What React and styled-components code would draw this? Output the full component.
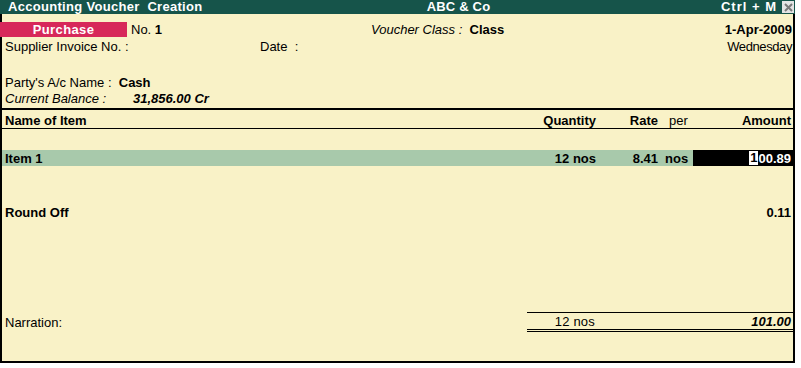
import styled, { createGlobalStyle } from "styled-components"

const GlobalStyle = createGlobalStyle`
  body {
    margin: 0;
    background: #ffffff;
    font-family: "Liberation Sans", Arial, sans-serif;
    font-size: 13px;
    color: #000;
  }
`

const Window = styled.div`
  width: 795px;
  height: 363px;
  display: flex;
  flex-direction: column;
`
const TitleBar = styled.div`
  height: 14px;
  background: #16544a;
  color: #fff;
  display: grid;
  grid-template-columns: 1fr auto 1fr;
  align-items: center;
  font-weight: bold;
  font-size: 13px;
  letter-spacing: 0.3px;
  line-height: 14px;
`
const TitleLeft = styled.span`
  padding-left: 8px;
  white-space: pre;
`
const TitleCenter = styled.span`
  padding-left: 122px;
  letter-spacing: 0.2px;
`
const TitleRight = styled.div`
  display: flex;
  justify-content: flex-end;
  align-items: center;
  gap: 5px;
  letter-spacing: 1px;
`
const CloseBox = styled.span`
  width: 12px;
  height: 12px;
  background: #e4e4e4;
  margin-right: 1px;
  display: flex;
  align-items: center;
  justify-content: center;
`
const Panel = styled.div`
  flex: 1;
  background: #f9f2c7;
  border: 2px solid #000;
  border-top: none;
  display: flex;
  flex-direction: column;
`
const Header = styled.div`
  padding-top: 8px;
  height: 86px;
`
const Row = styled.div`
  display: flex;
  align-items: center;
  height: ${(p) => p.$h || 16}px;
  margin-top: ${(p) => p.$mt || 0}px;
`
const Badge = styled.span`
  width: 127px;
  height: 15px;
  margin-left: -2px;
  background: #d7285a;
  color: #fff;
  font-weight: bold;
  letter-spacing: 0.4px;
  display: flex;
  align-items: center;
  justify-content: center;
`
const Field = styled.span`
  width: ${(p) => (p.$w ? `${p.$w}px` : "auto")};
  padding-left: ${(p) => p.$pl || 0}px;
  white-space: pre;
`
const Label = styled.span`
  font-style: ${(p) => (p.$italic ? "italic" : "normal")};
  white-space: pre;
`
const Value = styled.span`
  font-weight: bold;
  font-style: ${(p) => (p.$italic ? "italic" : "normal")};
  white-space: pre;
`
const RightText = styled.span`
  margin-left: auto;
  padding-right: 1px;
  font-weight: ${(p) => (p.$bold ? "bold" : "normal")};
  letter-spacing: ${(p) => (p.$bold ? 0 : -0.4)}px;
`
const Divider = styled.div`
  border-top: ${(p) => (p.$thick ? 2 : 1)}px solid #000;
`
const TableRow = styled.div`
  display: grid;
  grid-template-columns: 1fr 62px 62px 33px 100px;
  align-items: center;
  box-sizing: border-box;
  height: ${(p) => p.$h || 16}px;
  padding-top: ${(p) => p.$pt || 0}px;
  margin-top: ${(p) => p.$mt || 0}px;
  background: ${(p) => (p.$active ? "#a8c9ab" : "transparent")};
  font-weight: bold;
`
const Cell = styled.span`
  text-align: ${(p) => p.$align || "right"};
  padding: 0 ${(p) => (p.$align === "left" ? 0 : 2)}px 0
    ${(p) => (p.$align === "left" ? p.$pl || 3 : 0)}px;
  font-weight: ${(p) => (p.$light ? "normal" : "bold")};
  white-space: pre;
`
const AmountCell = styled.span`
  background: #000;
  color: #fff;
  height: 100%;
  display: flex;
  align-items: center;
  justify-content: flex-end;
  padding-right: 2px;
`
const Cursor = styled.span`
  background: #fff;
  color: #000;
  padding: 0 1px;
  line-height: 14px;
`
const Spacer = styled.div`
  flex: 1;
`
const Footer = styled.div`
  display: flex;
  align-items: center;
  padding-bottom: 29px;
`
const Narration = styled.span`
  flex: 1;
  padding-left: 3px;
  padding-top: 1px;
`
const Totals = styled.div`
  width: 266px;
  border-top: 1px solid #000;
  border-bottom: 3px double #000;
  display: grid;
  grid-template-columns: 1fr 100px;
  height: 16px;
  align-items: center;
`
const TotalQty = styled.span`
  text-align: right;
  padding-right: 98px;
  letter-spacing: 0.2px;
`
const TotalAmount = styled.span`
  text-align: right;
  padding-right: 2px;
  font-weight: bold;
  font-style: italic;
`

export default function App() {
  return (
    <>
      <GlobalStyle />
      <Window>
        <TitleBar>
          <TitleLeft>Accounting Voucher  Creation</TitleLeft>
          <TitleCenter>ABC &amp; Co</TitleCenter>
          <TitleRight>
            <span>Ctrl + M</span>
            <CloseBox>
              <svg width="9" height="9" viewBox="0 0 9 9">
                <path d="M1 1L8 8M8 1L1 8" stroke="#7a7a7a" strokeWidth="2" />
              </svg>
            </CloseBox>
          </TitleRight>
        </TitleBar>
        <Panel>
          <Header>
            <Row $h={15}>
              <Badge>Purchase</Badge>
              <Field $w={240} $pl={4}>
                <Label>No. </Label>
                <Value>1</Value>
              </Field>
              <Field>
                <Label $italic>Voucher Class :  </Label>
                <Value>Class</Value>
              </Field>
              <RightText $bold>1-Apr-2009</RightText>
            </Row>
            <Row $mt={1}>
              <Field $w={255} $pl={3}>
                <Label>Supplier Invoice No. :</Label>
              </Field>
              <Label>Date  :</Label>
              <RightText>Wednesday</RightText>
            </Row>
            <Row $mt={20}>
              <Field $pl={3}>
                <Label>Party's A/c Name :  </Label>
                <Value>Cash</Value>
              </Field>
            </Row>
            <Row>
              <Field $w={128} $pl={3}>
                <Label $italic>Current Balance :</Label>
              </Field>
              <Value $italic>31,856.00 Cr</Value>
            </Row>
          </Header>
          <Divider $thick />
          <TableRow $h={18} $pt={3}>
            <Cell $align="left">Name of Item</Cell>
            <Cell>Quantity</Cell>
            <Cell>Rate</Cell>
            <Cell $align="left" $pl={9} $light>per</Cell>
            <Cell>Amount</Cell>
          </TableRow>
          <Divider />
          <TableRow $mt={21} $active>
            <Cell $align="left">Item 1</Cell>
            <Cell>12 nos</Cell>
            <Cell>8.41</Cell>
            <Cell $align="left" $pl={5}>nos</Cell>
            <AmountCell>
              <Cursor>1</Cursor>00.89
            </AmountCell>
          </TableRow>
          <TableRow $mt={38}>
            <Cell $align="left">Round Off</Cell>
            <Cell />
            <Cell />
            <Cell />
            <Cell>0.11</Cell>
          </TableRow>
          <Spacer />
          <Footer>
            <Narration>Narration:</Narration>
            <Totals>
              <TotalQty>12 nos</TotalQty>
              <TotalAmount>101.00</TotalAmount>
            </Totals>
          </Footer>
        </Panel>
      </Window>
    </>
  )
}
